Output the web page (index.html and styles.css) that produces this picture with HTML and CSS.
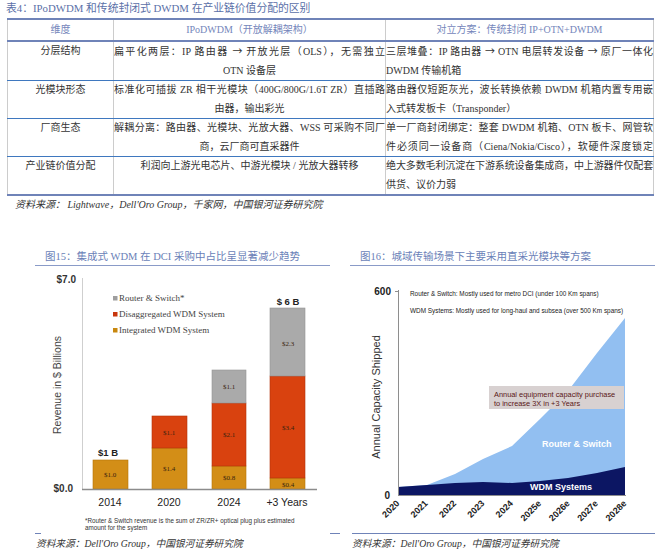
FILE: index.html
```html
<!DOCTYPE html>
<html lang="zh-CN">
<head>
<meta charset="utf-8">
<title>IPoDWDM</title>
<link rel="stylesheet" href="styles.css">
</head>
<body>
<div class="page">
  <div class="doc-title">表4：IPoDWDM 和传统封闭式 DWDM 在产业链价值分配的区别</div>
  <table class="cmp">
    <colgroup><col class="w1"><col class="w2"><col class="w3"></colgroup>
    <thead>
      <tr><th>维度</th><th>IPoDWDM（开放解耦架构）</th><th>对立方案：传统封闭 IP+OTN+DWDM</th></tr>
    </thead>
    <tbody>
      <tr>
        <td class="c1">分层结构</td>
        <td class="c2"><div class="j">扁平化两层：IP 路由器 <span class="ar">→</span> 开放光层（OLS），无需独立</div><div class="ctr">OTN 设备层</div></td>
        <td class="c3"><div class="j">三层堆叠：IP 路由器 <span class="ar">→</span> OTN 电层转发设备 <span class="ar">→</span> 原厂一体化</div><div>DWDM 传输机箱</div></td>
      </tr>
      <tr>
        <td class="c1">光模块形态</td>
        <td class="c2"><div class="j">标准化可插拔 ZR 相干光模块（400G/800G/1.6T ZR）直插路</div><div class="ctr">由器，输出彩光</div></td>
        <td class="c3"><div class="j">路由器仅短距灰光，波长转换依赖 DWDM 机箱内置专用嵌</div><div>入式转发板卡（Transponder）</div></td>
      </tr>
      <tr>
        <td class="c1">厂商生态</td>
        <td class="c2"><div class="j">解耦分离：路由器、光模块、光放大器、WSS 可采购不同厂</div><div class="ctr">商，云厂商可直采器件</div></td>
        <td class="c3"><div class="j">单一厂商封闭绑定：整套 DWDM 机箱、OTN 板卡、网管软</div><div class="j">件必须同一设备商（Ciena/Nokia/Cisco），软硬件深度锁定</div></td>
      </tr>
      <tr class="last">
        <td class="c1">产业链价值分配</td>
        <td class="c2"><div class="ctr">利润向上游光电芯片、中游光模块 / 光放大器转移</div></td>
        <td class="c3"><div class="j tight">绝大多数毛利沉淀在下游系统设备集成商，中上游器件仅配套</div><div>供货、议价力弱</div></td>
      </tr>
    </tbody>
  </table>
  <div class="src">资料来源： Lightwave，Dell'Oro Group，千家网，中国银河证券研究院</div>

  <div class="figs">
    <div class="fig fig-left">
      <div class="cap">图15：集成式 WDM 在 DCI 采购中占比呈显著减少趋势</div>
      <svg class="chart" width="295" height="267" viewBox="35 265 295 267">
        <line x1="82.5" y1="277" x2="82.5" y2="488" stroke="#cfcfcf" stroke-width="1"/>
        <text x="76" y="282" text-anchor="end" class="yl">$7.0</text>
        <text x="73" y="491" text-anchor="end" class="yl">$0.0</text>
        <text transform="translate(61 384) rotate(-90)" text-anchor="middle" class="ytitle">Revenue in $ Billions</text>

        <rect x="113" y="295" width="4.5" height="4.5" fill="#9e9e9e"/>
        <text x="119" y="300" class="leg">Router &amp; Switch*</text>
        <rect x="113" y="311" width="4.5" height="4.5" fill="#c8360c"/>
        <text x="119" y="316" class="leg">Disaggregated WDM System</text>
        <rect x="113" y="327" width="4.5" height="4.5" fill="#c8870e"/>
        <text x="119" y="332" class="leg">Integrated WDM System</text>

        <g class="bars">
          <rect x="93" y="459" width="35" height="29" class="or"/>
          <rect x="152" y="447" width="35" height="41" class="or"/>
          <rect x="152" y="415" width="35" height="32" class="rd"/>
          <rect x="212" y="465" width="34" height="23" class="or"/>
          <rect x="212" y="402" width="34" height="63" class="rd"/>
          <rect x="212" y="369" width="34" height="33" class="gy"/>
          <rect x="270" y="477" width="35" height="11" class="or"/>
          <rect x="270" y="375" width="35" height="102" class="rd"/>
          <rect x="270" y="307" width="35" height="68" class="gy"/>
        </g>
        <g class="bl" text-anchor="middle">
          <text x="110" y="476">$1.0</text>
          <text x="169" y="470">$1.4</text>
          <text x="169" y="434">$1.1</text>
          <text x="229" y="479">$0.8</text>
          <text x="229" y="436">$2.1</text>
          <text x="229" y="388">$1.1</text>
          <text x="288" y="486">$0.4</text>
          <text x="288" y="429">$3.4</text>
          <text x="288" y="345">$2.3</text>
        </g>
        <text x="108" y="455" text-anchor="middle" class="tot">$1 B</text>
        <text x="288" y="304" text-anchor="middle" class="tot">$ 6 B</text>
        <line x1="82" y1="488.5" x2="317" y2="488.5" stroke="#8c8c8c" stroke-width="1.5"/>
        <g class="xl" text-anchor="middle">
          <text x="110" y="505">2014</text>
          <text x="169" y="505">2020</text>
          <text x="229" y="505">2024</text>
          <text x="287" y="505">+3 Years</text>
        </g>
        <text x="85" y="522" class="fn">*Router &amp; Switch revenue is the sum of ZR/ZR+ optical plug plus estimated</text>
        <text x="85" y="529" class="fn">amount for the system</text>
      </svg>
    </div>

    <div class="fig fig-right">
      <div class="cap">图16：城域传输场景下主要采用直采光模块等方案</div>
      <svg class="chart" width="305" height="267" viewBox="350 265 305 267">
        <polygon class="rs" points="398,486 427,484 455,473 483,458 512,445 540,418 568,390 597,352 625,317 625,494 398,494"/>
        <polygon class="wdm" points="398,486 427,484 455,482 483,481 512,482 540,480 568,477 597,472 625,466 625,494 398,494"/>
        <rect x="489" y="385" width="135" height="23" fill="#d8d1d1"/>
        <text x="494" y="396" class="ann">Annual equipment capacity purchase</text>
        <text x="494" y="405" class="ann">to increase 3X in +3 Years</text>
        <text x="542" y="446" class="inl">Router &amp; Switch</text>
        <text x="530" y="489" class="inl">WDM Systems</text>
        <text x="410" y="295" class="lg2">Router &amp; Switch: Mostly used for metro DCI (under 100 Km spans)</text>
        <text x="410" y="312" class="lg2">WDM Systems: Mostly used for long-haul and subsea (over 500 Km spans)</text>
        <line x1="398.5" y1="289" x2="398.5" y2="494" stroke="#8e8e8e" stroke-width="1"/>
        <line x1="395" y1="290.5" x2="398.5" y2="290.5" stroke="#8e8e8e" stroke-width="1"/>
        <line x1="398" y1="494.5" x2="626" y2="494.5" stroke="#8e8e8e" stroke-width="1"/>
        <text x="391" y="294" text-anchor="end" class="yl2">600</text>
        <text x="390" y="498" text-anchor="end" class="yl2">0</text>
        <text transform="translate(380 396) rotate(-90)" text-anchor="middle" class="ytitle2">Annual Capacity Shipped</text>
        <g class="xr" text-anchor="end">
          <text transform="translate(400 503) rotate(-45)">2020</text>
          <text transform="translate(428.4 503) rotate(-45)">2021</text>
          <text transform="translate(456.8 503) rotate(-45)">2022</text>
          <text transform="translate(485.1 503) rotate(-45)">2023</text>
          <text transform="translate(513.5 503) rotate(-45)">2024</text>
          <text transform="translate(541.9 503) rotate(-45)">2025e</text>
          <text transform="translate(570.3 503) rotate(-45)">2026e</text>
          <text transform="translate(598.6 503) rotate(-45)">2027e</text>
          <text transform="translate(627 503) rotate(-45)">2028e</text>
        </g>
      </svg>
    </div>
  </div>
  <div class="figrule"></div>
  <div class="figsrc">
    <span class="fs-left">资料来源：Dell'Oro Group，中国银河证券研究院</span>
    <span>资料来源：Dell'Oro Group，中国银河证券研究院</span>
  </div>
</div>
</body>
</html>
```

FILE: styles.css
```css
body {
  margin: 0;
  background: #ffffff;
  font-family: "Liberation Serif", "Noto Sans CJK SC", serif;
  color: #333333;
}

.page {
  width: 658px;
}

.doc-title {
  height: 18px;
  line-height: 16px;
  padding-left: 6px;
  font-size: 10.8px;
  color: #5b70a8;
  white-space: nowrap;
}

.cmp {
  margin-left: 7px;
  width: 646px;
  table-layout: fixed;
  border-collapse: collapse;
  font-size: 10px;
}

.w1 { width: 106px; }
.w2 { width: 272px; }
.w3 { width: 268px; }

.cmp th {
  height: 20px;
  padding: 0;
  font-weight: normal;
  line-height: 20px;
  color: #7486bb;
  border-top: 2px solid #6f83b8;
  border-bottom: 2px solid #6f83b8;
  border-left: 1px solid #cccccc;
  border-right: 1px solid #cccccc;
  white-space: nowrap;
}

.cmp td {
  height: 37px;
  padding: 0;
  vertical-align: top;
  line-height: 18.5px;
  color: #333333;
  border-left: 1px solid #cccccc;
  border-right: 1px solid #cccccc;
  border-bottom: 1px solid #3f78bf;
}

.cmp tr.last td {
  border-bottom: 2px solid #6f83b8;
}

.c1 {
  text-align: center;
}

.c2 {
  padding: 0 1px 0 1px;
}

.c3 {
  padding: 0 0 0 1px;
  text-align: left;
}

.j {
  text-align: justify;
  text-align-last: justify;
}

.tight {
  letter-spacing: -0.2px;
}

.ar {
  font-family: "Noto Sans CJK SC", sans-serif;
}

.ctr {
  text-align: center;
}

.src {
  margin-top: 2px;
  padding-left: 15px;
  font-size: 10px;
  line-height: 14px;
  font-style: italic;
  color: #333333;
}

.figs {
  display: flex;
  gap: 20px;
  margin-top: 36px;
  padding-left: 35px;
}

.fig-left { width: 295px; }
.fig-right { width: 305px; }

.cap {
  height: 17px;
  line-height: 17px;
  padding-left: 10px;
  font-size: 10.5px;
  color: #6a7fb8;
  border-bottom: 1px solid #8a9bc8;
  white-space: nowrap;
}

.chart {
  display: block;
}

.chart text {
  font-family: "Liberation Sans", Arial, sans-serif;
}

.yl { font-size: 10px; font-weight: bold; fill: #333333; }
.ytitle { font-size: 10.5px; fill: #444444; }
.leg { font-family: "Liberation Serif", serif !important; font-size: 9px; fill: #444444; }
.or { fill: #d38e17; stroke: #b57608; stroke-width: 0.6; }
.rd { fill: #d9420f; stroke: #b3340a; stroke-width: 0.6; }
.gy { fill: #aaaaaa; stroke: #959595; stroke-width: 0.6; }
.bl text { font-family: "Liberation Serif", serif !important; font-size: 7px; fill: #3a2410; }
.tot { font-size: 9.5px; font-weight: bold; fill: #222222; }
.xl text { font-size: 10.5px; fill: #222222; }
.fn { font-size: 6.3px; fill: #333333; }

.rs { fill: #92bff1; }
.wdm { fill: #0c1663; }
.ann { font-size: 7.4px; fill: #5a1717; }
.inl { font-size: 9px; font-weight: bold; fill: #ffffff; }
.lg2 { font-size: 6.4px; fill: #222222; }
.yl2 { font-size: 10px; font-weight: bold; fill: #222222; }
.ytitle2 { font-size: 11px; fill: #333333; }
.xr text { font-size: 9px; font-weight: bold; fill: #222222; }

.figrule {
  margin-left: 35px;
  width: 620px;
  height: 1px;
  background: linear-gradient(to right,
    #6f83b8 0, #6f83b8 6px,
    transparent 6px, transparent 295px,
    #6f83b8 295px, #6f83b8 305px,
    transparent 305px, transparent 317px,
    #6f83b8 317px, #6f83b8 620px);
}

.figsrc {
  display: flex;
  margin-top: 3px;
  padding-left: 36px;
  font-size: 9.7px;
  line-height: 14px;
  font-style: italic;
  color: #333333;
}

.fs-left {
  width: 316px;
}
```
